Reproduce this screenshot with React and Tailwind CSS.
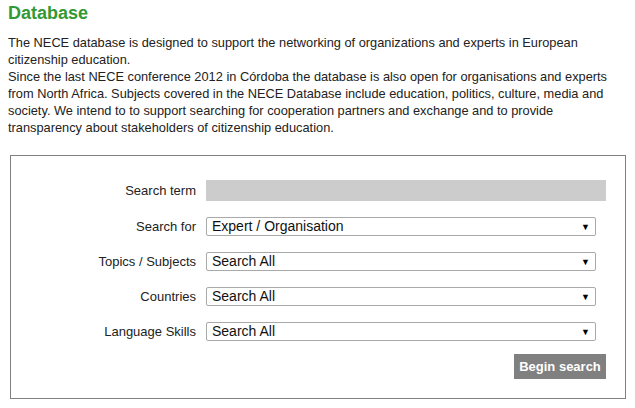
import React from "react";

const font = { fontFamily: '"Liberation Sans", Arial, sans-serif' };

function Select({ value }) {
  return (
    <div className="relative flex h-[19px] w-[390px] items-center rounded-[2px] border border-[#a9a9a9] bg-white pl-[5px] text-[14px] text-[#111]">
      <span>{value}</span>
      <span className="absolute right-[5px] top-[1px] text-[9px] leading-[17px] text-black">▼</span>
    </div>
  );
}

function Row({ label, children }) {
  return (
    <div className="flex h-[19px] items-center">
      <div className="w-[185px] shrink-0 text-right text-[13px] text-[#222]">{label}</div>
      <div className="ml-[10px]">{children}</div>
    </div>
  );
}

export default function App() {
  return (
    <div className="h-[408px] w-[635px] bg-white px-[8px]" style={font}>
      <h2 className="pt-[2px] text-[18px] font-bold leading-[22px] text-[#339933]">Database</h2>
      <div className="mt-[10px] w-[617px] text-[12.8px] leading-[17px] text-[#222]">
        <p>The NECE database is designed to support the networking of organizations and experts in European citizenship education.</p>
        <p>Since the last NECE conference 2012 in Córdoba the database is also open for organisations and experts from North Africa. Subjects covered in the NECE Database include education, politics, culture, media and society. We intend to to support searching for cooperation partners and exchange and to provide transparency about stakeholders of citizenship education.</p>
      </div>
      <div className="ml-[2px] mt-[19px] flex h-[244px] w-[616px] flex-col border border-[#808080] pt-[24px]">
        <div className="flex h-[21px] items-center">
          <div className="w-[185px] shrink-0 text-right text-[13px] text-[#222]">Search term</div>
          <div className="ml-[10px] h-[21px] w-[400px] bg-[#cccccc]"></div>
        </div>
        <div className="mt-[16px] flex flex-col gap-[16px]">
          <Row label="Search for"><Select value="Expert / Organisation" /></Row>
          <Row label="Topics / Subjects"><Select value="Search All" /></Row>
          <Row label="Countries"><Select value="Search All" /></Row>
          <Row label="Language Skills"><Select value="Search All" /></Row>
        </div>
        <div className="mt-[13px] flex justify-end pr-[19px]">
          <button className="h-[25px] w-[92px] bg-[#808080] text-[13px] font-bold text-white">Begin search</button>
        </div>
      </div>
    </div>
  );
}
